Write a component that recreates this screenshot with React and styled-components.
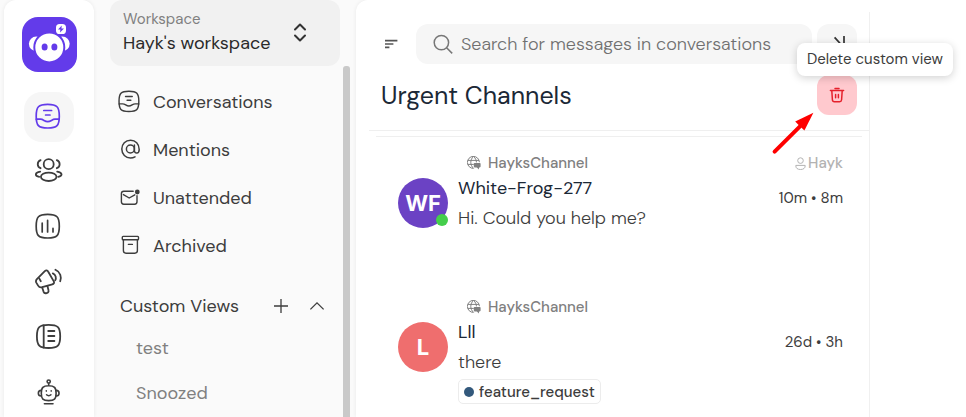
import React from 'react';
import styled, { createGlobalStyle } from 'styled-components';

const navItems = [
  { label: 'Conversations', icon: <InboxIcon size={24} /> },
  { label: 'Mentions', icon: <MentionIcon /> },
  { label: 'Unattended', icon: <MailIcon /> },
  { label: 'Archived', icon: <ArchiveIcon /> },
];

const railItems = [
  { label: 'Inbox', icon: <InboxIcon size={28} />, active: true },
  { label: 'Contacts', icon: <ContactsIcon /> },
  { label: 'Reports', icon: <ReportsIcon /> },
  { label: 'Campaigns', icon: <CampaignIcon /> },
  { label: 'Help center', icon: <BookIcon /> },
  { label: 'Bots', icon: <BotIcon /> },
];

const customViews = ['test', 'Snoozed'];

const conversations = [
  {
    channel: 'HayksChannel',
    name: 'White-Frog-277',
    message: 'Hi. Could you help me?',
    initials: 'WF',
    color: '#6b42c4',
    online: true,
    assignee: 'Hayk',
    time: '10m • 8m',
  },
  {
    channel: 'HayksChannel',
    name: 'Lll',
    message: 'there',
    initials: 'L',
    color: '#ef6e6e',
    time: '26d • 3h',
    tag: 'feature_request',
  },
];

function InboxIcon({ size }) {
  return (
    <svg width={size} height={size} viewBox="0 0 28 28" fill="none" stroke="currentColor" strokeWidth="1.7" strokeLinecap="round">
      <path d="M1.2 13.2C1.2 3.8 3.4 1.4 12.7 1.4S24.3 3.8 24.3 13.2 22.1 25 12.7 25 1.2 22.6 1.2 13.2Z" />
      <path d="M1.4 16.2H5.5C8.5 16.2 9.5 18.7 12.7 18.7S17 16.2 20 16.2H24.2" />
      <path d="M8.8 7.5H16.6M10.6 12H15" />
    </svg>
  );
}

function ContactsIcon() {
  return (
    <svg width="28" height="28" viewBox="0 0 28 28" fill="none" stroke="currentColor" strokeWidth="1.8" strokeLinecap="round">
      <circle cx="13.7" cy="6.2" r="5" />
      <ellipse cx="13.7" cy="18.8" rx="7.8" ry="4.2" />
      <path d="M5.6 2.2C1.8 3.8 1.8 8.6 5.6 10.2M21.8 2.2C25.6 3.8 25.6 8.6 21.8 10.2" />
      <path d="M5.2 13.7C-.4 14.6-.4 18 4.2 18.8M22.2 13.7C27.8 14.6 27.8 18 23.2 18.8" />
    </svg>
  );
}

function ReportsIcon() {
  return (
    <svg width="28" height="28" viewBox="0 0 28 28" fill="none" stroke="currentColor" strokeWidth="1.7" strokeLinecap="round">
      <path d="M1.2 13.2C1.2 3.8 3.4 1.4 12.7 1.4S24.3 3.8 24.3 13.2 22.1 25 12.7 25 1.2 22.6 1.2 13.2Z" />
      <path d="M7.2 10.2V19M12.6 7.4V19M18 15.4V19" />
    </svg>
  );
}

function CampaignIcon() {
  return (
    <svg width="28" height="28" viewBox="0 0 28 28" fill="none" stroke="currentColor" strokeWidth="1.8" strokeLinecap="round" strokeLinejoin="round">
      <path d="M9.8 3.2C11 2 12.4 2.2 13.1 3.5L18.8 13.4C19.5 14.8 18.7 16 17.3 16.3L7.2 19.2C5.2 19.7 4.2 19.4 3.1 17.6L1.3 14.6C.6 13.2.9 12.2 1.9 11.1Z" />
      <path d="M4.2 10.4L5.8 13.2M7.2 19.4L8.5 23.6C9 25 10.2 25.5 11.6 25.1 13.2 24.7 13.9 23.6 13.5 22.2L12.5 18.2" />
      <path d="M17.8 5.4C20.8 6.7 21.6 10 20.2 12.4M20.4 1.8C25.4 4 26.8 9 25.2 13.2" />
    </svg>
  );
}

function BookIcon() {
  return (
    <svg width="28" height="28" viewBox="0 0 28 28" fill="none" stroke="currentColor" strokeWidth="1.8" strokeLinecap="round">
      <path d="M1.9 13.3C1.9 4 4.3 1.9 13.6 1.9S25.2 4 25.2 13.3 22.9 25 13.6 25 1.9 22.6 1.9 13.3Z" />
      <path d="M8.7 2.3V24.6M13.2 8H19.4M13.2 13H19.4M13.2 18H19.4" />
    </svg>
  );
}

function BotIcon() {
  return (
    <svg width="28" height="28" viewBox="0 0 28 28" fill="none" stroke="currentColor" strokeWidth="1.6" strokeLinecap="round">
      <circle cx="13.7" cy="3.6" r="1.6" />
      <path d="M13.7 5.4V7.5M6.3 15.3C6.3 9.5 8 7.8 13.7 7.8S21.1 9.5 21.1 15.3 19.4 22.6 13.7 22.6 6.3 21 6.3 15.3Z" />
      <path d="M6.2 12.4C2.4 12.4 2.4 18 6.2 18M21.2 12.4C25 12.4 25 18 21.2 18M9.4 25.7H18" />
      <path d="M11.3 12.9V13.1M16.2 12.9V13.1M11.6 16.8C12.8 18 14.7 18 15.9 16.8" />
    </svg>
  );
}

function MentionIcon() {
  return (
    <svg width="24" height="24" viewBox="0 0 24 24" fill="none" stroke="currentColor" strokeWidth="1.5" strokeLinecap="round">
      <circle cx="12.4" cy="11" r="4" />
      <path d="M16.4 7V12.5C16.4 16.2 21.2 16 21.2 11.4 21.2 6 17.4 2.2 12.6 2.2 7.4 2.2 3.8 6.2 3.8 11.1 3.8 16.4 7.7 20 12.4 20 14 20 15.6 19.6 17 18.8" />
    </svg>
  );
}

function MailIcon() {
  return (
    <svg width="24" height="24" viewBox="0 0 24 24" fill="none" stroke="currentColor" strokeWidth="1.4" strokeLinecap="round" strokeLinejoin="round">
      <path d="M15.2 5.2H5.8C4.4 5.2 3.4 6.2 3.4 7.6V15.8C3.4 17.2 4.4 18.2 5.8 18.2H16.6C18 18.2 19 17.2 19 15.8V9.8" />
      <path d="M5.4 8.6L11.2 12 16.8 8.8" />
      <circle cx="19.3" cy="6" r="2.4" fill="currentColor" stroke="none" />
    </svg>
  );
}

function ArchiveIcon() {
  return (
    <svg width="24" height="24" viewBox="0 0 24 24" fill="none" stroke="currentColor" strokeWidth="1.4" strokeLinecap="round" strokeLinejoin="round">
      <rect x="4.3" y="2.4" width="16.2" height="3.4" rx=".8" />
      <path d="M5.4 5.8V16.6C5.4 18.2 6.4 19.2 8 19.2H16.8C18.4 19.2 19.4 18.2 19.4 16.6V5.8M10.4 10.4H14.4" />
    </svg>
  );
}

function GlobeIcon() {
  return (
    <svg width="14" height="14" viewBox="0 0 14 14" fill="none" stroke="currentColor" strokeWidth="1">
      <path d="M12.4 6.2A6 6 0 1 0 6.5 12.4M.8 4.4H12M.8 8.4H6.8M6.5.5C2.9 3.6 2.9 9.2 6.5 12.3M6.5.5C8.6 2.2 9.4 4.2 9.4 6.4" />
      <path d="M7.6 6.9H12.7Q13.6 6.9 13.6 7.8V10.6Q13.6 11.4 12.7 11.4H12V13.4L9.8 11.4H7.6Q6.8 11.4 6.8 10.6V7.8Q6.8 6.9 7.6 6.9Z" fill="currentColor" stroke="none" />
    </svg>
  );
}

function Logo() {
  return (
    <svg width="55" height="55" viewBox="0 0 55 55" aria-hidden="true">
      <rect width="55" height="55" rx="16" fill="#633bea" />
      <circle cx="14.2" cy="26.8" r="7.3" fill="#fff" />
      <circle cx="40.4" cy="26.8" r="7.3" fill="#fff" />
      <circle cx="27.3" cy="30.4" r="15" fill="#fff" stroke="#633bea" strokeWidth="2" />
      <ellipse cx="22.6" cy="30" rx="3" ry="3.6" fill="#633bea" />
      <ellipse cx="32.4" cy="30" rx="3" ry="3.6" fill="#633bea" />
      <rect x="34" y="7" width="10" height="10" rx="3.6" fill="#fff" />
      <path d="M39.8 8.4L36 12.4H38.4L38 15.6 42 11.4H39.4Z" fill="#633bea" />
    </svg>
  );
}

const App = () => {
  return (
    <>
      <GlobalStyle />
      <Layout>
        <Rail>
          <Logo />
          <RailNav>
            {railItems.map((item) => (
              <RailButton key={item.label} aria-label={item.label} $active={item.active}>
                {item.icon}
              </RailButton>
            ))}
          </RailNav>
        </Rail>

        <Sidebar>
          <WorkspaceButton>
            <span>
              <WorkspaceLabel>Workspace</WorkspaceLabel>
              <WorkspaceName>Hayk's workspace</WorkspaceName>
            </span>
            <svg width="14" height="20" viewBox="0 0 14 20" fill="none" stroke="#333" strokeWidth="2" strokeLinecap="round" strokeLinejoin="round">
              <path d="M2 6.5L7 1.5 12 6.5M2 12.5L7 17.5 12 12.5" />
            </svg>
          </WorkspaceButton>
          <ScrollArea>
            <SideNav>
              {navItems.map((item) => (
                <NavLink href="#" key={item.label}>
                  {item.icon}
                  {item.label}
                </NavLink>
              ))}
              <ViewsHeader>
                <ViewsTitle>Custom Views</ViewsTitle>
                <PlainButton aria-label="Add view">
                  <svg width="16" height="16" viewBox="0 0 16 16" stroke="currentColor" strokeWidth="1.3">
                    <path d="M8 1V15M1 8H15" />
                  </svg>
                </PlainButton>
                <PlainButton aria-label="Collapse views">
                  <svg width="16" height="16" viewBox="0 0 16 16" fill="none" stroke="currentColor" strokeWidth="1.3">
                    <path d="M1.4 11.4L8 4.8 14.6 11.4" />
                  </svg>
                </PlainButton>
              </ViewsHeader>
              {customViews.map((view) => (
                <ViewLink href="#" key={view}>{view}</ViewLink>
              ))}
            </SideNav>
            <ScrollThumb />
          </ScrollArea>
        </Sidebar>

        <Main>
          <ListPanel>
            <TopBar>
              <PlainButton aria-label="Sort">
                <svg width="16" height="16" viewBox="0 0 16 16" stroke="#555" strokeWidth="1.7">
                  <path d="M2 4.6H14.4M2 8H10.4M2 11.4H6.4" />
                </svg>
              </PlainButton>
              <SearchBox>
                <svg width="20" height="20" viewBox="0 0 20 20" fill="none" stroke="#777" strokeWidth="1.5">
                  <circle cx="8.4" cy="8.6" r="7.2" />
                  <path d="M13.6 13.8L19.2 19.4" />
                </svg>
                <SearchInput aria-label="Search" placeholder="Search for messages in conversations" />
              </SearchBox>
              <SquareButton aria-label="Hide panel">
                <svg width="24" height="24" viewBox="0 0 24 24" fill="none" stroke="#333" strokeWidth="1.7">
                  <path d="M9.6 5.4L15.6 12 9.6 18.6M19 4V20" />
                </svg>
              </SquareButton>
            </TopBar>
            <TitleBar>
              <Title>Urgent Channels</Title>
              <DeleteWrap>
                <SquareButton aria-label="Delete custom view" $danger>
                  <svg width="16" height="16" viewBox="0 0 16 16" fill="none" stroke="#e5202b" strokeWidth="1.5" strokeLinecap="round" strokeLinejoin="round">
                    <path d="M1.4 3.6H14.6M6 1.4H10M2.8 3.8L3.4 12.8C3.5 14 4.2 14.7 5.4 14.7H10.6C11.8 14.7 12.5 14 12.6 12.8L13.2 3.8M6.6 7.4V10.8M9.4 7.4V10.8" />
                  </svg>
                </SquareButton>
                <Tooltip role="tooltip">Delete custom view</Tooltip>
                <Pointer viewBox="0 0 46 46" aria-hidden="true">
                  <path d="M4.6 41.6L30 16.4" stroke="#fe0000" strokeWidth="4" strokeLinecap="round" />
                  <path d="M43.4 2.8L25.2 11.6 29.6 16 34.4 20.6Z" fill="#fe0000" />
                </Pointer>
              </DeleteWrap>
            </TitleBar>

            <ConversationList>
              {conversations.map((item) => (
                <Conversation key={item.name}>
                  <Avatar $color={item.color}>
                    {item.initials}
                    {item.online && <OnlineDot />}
                  </Avatar>
                  <Details>
                    <Channel>
                      <GlobeIcon />
                      {item.channel}
                    </Channel>
                    <Name>{item.name}</Name>
                    <Message>{item.message}</Message>
                    {item.tag && (
                      <Tag>
                        <TagDot />
                        {item.tag}
                      </Tag>
                    )}
                  </Details>
                  <Meta>
                    <Assignee>
                      {item.assignee && (
                        <>
                          <svg width="11" height="13" viewBox="0 0 11 13" fill="none" stroke="currentColor" strokeWidth="1">
                            <circle cx="5.5" cy="3.6" r="2.8" />
                            <path d="M.8 8.4H10.2C10.4 11.2 8.4 12.5 5.5 12.5S.6 11.2.8 8.4Z" />
                          </svg>
                          {item.assignee}
                        </>
                      )}
                    </Assignee>
                    <Time>{item.time}</Time>
                  </Meta>
                </Conversation>
              ))}
            </ConversationList>
          </ListPanel>
          <EmptyPanel />
        </Main>
      </Layout>
    </>
  );
};

const GlobalStyle = createGlobalStyle`
  * {
    box-sizing: border-box;
  }

  body {
    margin: 0;
    background: #fafafa;
    color: #3d3d3d;
    font-family: 'DM Sans', Inter, 'Liberation Sans', sans-serif;
    font-size: 18px;
  }

  button, input {
    font: inherit;
    color: inherit;
    border: none;
    background: none;
    padding: 0;
  }

  a {
    color: inherit;
    text-decoration: none;
  }

  svg {
    display: block;
    flex-shrink: 0;
  }
`;

const Layout = styled.div`
  display: flex;
  height: 100vh;
  padding-left: 4px;
  overflow: hidden;
`;

const Rail = styled.aside`
  flex: 0 0 90px;
  display: flex;
  flex-direction: column;
  align-items: center;
  gap: 20px;
  padding-top: 17px;
  background: #ffffff;
  border-radius: 12px 12px 0 0;
  box-shadow: 0 0 4px rgba(0, 0, 0, 0.07);
`;

const RailNav = styled.nav`
  display: flex;
  flex-direction: column;
  gap: 5px;
`;

const RailButton = styled.button`
  display: flex;
  flex-shrink: 0;
  align-items: center;
  justify-content: center;
  width: 50px;
  height: 50px;
  border-radius: 18px;
  background: ${props => props.$active ? '#f6f6f6' : 'transparent'};
  color: ${props => props.$active ? '#633bea' : '#3d3d3d'};
`;

const Sidebar = styled.div`
  flex: 0 0 262px;
  display: flex;
  flex-direction: column;
`;

const WorkspaceButton = styled.button`
  display: flex;
  align-items: center;
  justify-content: space-between;
  height: 66px;
  margin: 0 16px;
  padding: 0 33px 0 13px;
  border-radius: 12px;
  background: #f1f1f1;
  text-align: left;
  flex-shrink: 0;
`;

const WorkspaceLabel = styled.span`
  display: block;
  font-size: 15px;
  line-height: 20px;
  color: #808080;
`;

const WorkspaceName = styled.span`
  display: block;
  line-height: 28px;
  color: #2a2a2a;
`;

const ScrollArea = styled.div`
  flex: 1;
  display: flex;
  min-height: 0;
  padding-right: 6px;
`;

const SideNav = styled.nav`
  flex: 1;
  display: flex;
  flex-direction: column;
  padding: 12px 18px 0 24px;
`;

const ScrollThumb = styled.div`
  width: 7px;
  background: #c9c9c9;
  border-radius: 3px 3px 0 0;
`;

const NavLink = styled.a`
  display: flex;
  align-items: center;
  gap: 11px;
  height: 48px;
  flex-shrink: 0;
`;

const ViewsHeader = styled.div`
  display: flex;
  align-items: center;
  gap: 20px;
  height: 40px;
  margin-top: 16px;
  padding-left: 2px;
  flex-shrink: 0;
`;

const ViewsTitle = styled.span`
  flex: 1;
`;

const PlainButton = styled.button`
  display: flex;
`;

const ViewLink = styled.a`
  height: 45px;
  padding-left: 18px;
  line-height: 45px;
  color: #808080;
  flex-shrink: 0;
`;

const Main = styled.main`
  flex: 1;
  display: flex;
  min-width: 0;
  background: #ffffff;
  border-radius: 12px 0 0 0;
  box-shadow: 0 0 4px rgba(0, 0, 0, 0.07);
`;

const ListPanel = styled.section`
  flex: 1;
  min-width: 0;
`;

const EmptyPanel = styled.div`
  flex: 0 0 97px;
  margin-top: 12px;
  border-left: 1px solid #f0f0f0;
`;

const TopBar = styled.div`
  display: flex;
  align-items: center;
  gap: 5px;
  padding: 24px 12px 0 27px;

  > ${PlainButton} {
    margin-right: 12px;
  }
`;

const SearchBox = styled.div`
  flex: 1;
  display: flex;
  align-items: center;
  gap: 8px;
  min-width: 0;
  height: 40px;
  padding: 0 17px;
  border-radius: 12px;
  background: #f6f6f6;
`;

const SearchInput = styled.input`
  flex: 1;
  min-width: 0;
  outline: none;
  font-weight: 300;

  &::placeholder {
    color: #707070;
    opacity: 1;
  }
`;

const SquareButton = styled.button`
  display: flex;
  align-items: center;
  justify-content: center;
  width: 40px;
  height: 40px;
  flex-shrink: 0;
  border-radius: 12px;
  background: ${props => props.$danger ? '#ffc9ce' : '#f6f6f6'};
`;

const TitleBar = styled.div`
  display: flex;
  align-items: center;
  justify-content: space-between;
  height: 67px;
  margin-left: 13px;
  padding: 0 12px 5px;
  border-bottom: 1px solid #efefef;
`;

const Title = styled.h1`
  margin: 0;
  padding-top: 2px;
  font-size: 25px;
  font-weight: 400;
  color: #1b2836;
`;

const DeleteWrap = styled.div`
  position: relative;
`;

const Tooltip = styled.div`
  position: absolute;
  right: -96px;
  bottom: 39px;
  padding: 0 10px;
  border-radius: 8px;
  background: #ffffff;
  box-shadow: 0 2px 8px rgba(0, 0, 0, 0.18);
  font-size: 15px;
  line-height: 33px;
  white-space: nowrap;
`;

const Pointer = styled.svg`
  position: absolute;
  top: 35px;
  right: 41px;
  width: 46px;
  height: 46px;
`;

const ConversationList = styled.div`
  margin: 5px 7px 0 20px;
  border-top: 1px solid #efefef;
`;

const Conversation = styled.article`
  display: flex;
  gap: 10px;
  height: 144px;
  padding: 16px 19px 0 22px;
`;

const Avatar = styled.div`
  position: relative;
  display: flex;
  align-items: center;
  justify-content: center;
  width: 50px;
  height: 50px;
  margin-top: 25px;
  flex-shrink: 0;
  border-radius: 50%;
  background: ${props => props.$color};
  color: #ffffff;
  font-family: Inter, sans-serif;
  font-size: 22px;
  font-weight: 700;
`;

const OnlineDot = styled.span`
  position: absolute;
  right: 0;
  bottom: 2px;
  width: 12px;
  height: 12px;
  border-radius: 50%;
  background: #44ce4b;
`;

const Details = styled.div`
  flex: 1;
  min-width: 0;
`;

const Channel = styled.div`
  display: flex;
  align-items: center;
  gap: 7px;
  padding-left: 9px;
  font-size: 15px;
  font-weight: 500;
  line-height: 20px;
  color: #808080;
`;

const Name = styled.div`
  line-height: 30px;
  color: #1b2836;
`;

const Message = styled.div`
  font-weight: 300;
  line-height: 30px;
`;

const Tag = styled.span`
  display: inline-flex;
  align-items: center;
  gap: 5px;
  height: 25px;
  margin-top: 2px;
  padding: 0 5px;
  border: 1px solid #ececec;
  border-radius: 5px;
  font-size: 15px;
  font-weight: 500;
`;

const TagDot = styled.span`
  width: 10px;
  height: 10px;
  border-radius: 50%;
  background: #33597c;
`;

const Meta = styled.div`
  display: flex;
  flex-direction: column;
  align-items: flex-end;
  gap: 15px;
`;

const Assignee = styled.div`
  display: flex;
  align-items: center;
  gap: 2px;
  height: 20px;
  font-size: 15px;
  font-weight: 500;
  color: #b3b3b3;
`;

const Time = styled.div`
  font-size: 15px;
  line-height: 20px;
`;

export default App;
